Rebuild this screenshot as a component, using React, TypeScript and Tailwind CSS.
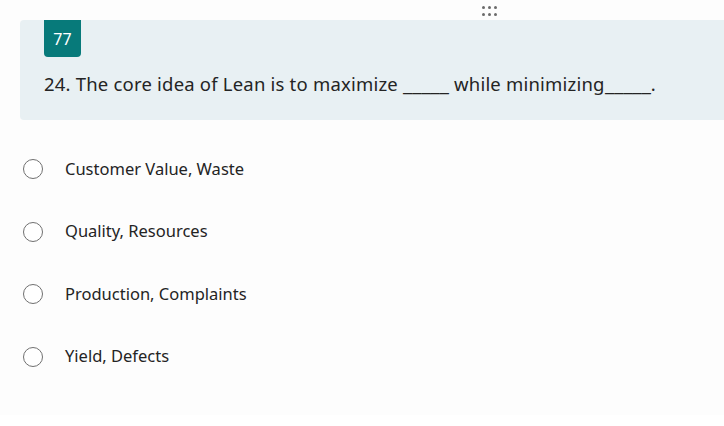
import React from 'react';

export default function App() {
  const options = ['Customer Value, Waste', 'Quality, Resources', 'Production, Complaints', 'Yield, Defects'];
  const blank = <span className="inline-block origin-left scale-x-[1.12] mr-[5px] tracking-normal">_____</span>;

  return (
    <div className="w-[724px] h-[426px] bg-white overflow-hidden" style={{ fontFamily: '"Segoe UI", "Noto Sans", "Open Sans", sans-serif' }}>
      <div className="h-[415px] bg-[#fdfdfd]">
        {/* drag handle */}
        <div className="h-5 flex justify-center pl-[254px] pt-[6px]">
          <div className="grid grid-cols-3 gap-x-[3px] gap-y-[4px] h-[10px]">
            {[0, 1, 2, 3, 4, 5].map((i) => (
              <span key={i} className="w-[3px] h-[3px] rounded-full bg-[#6b6b6b]" />
            ))}
          </div>
        </div>

        <div className="ml-5 h-[100px] bg-[#e8f0f3] rounded-l-[4px] pl-[24px]">
          <div className="w-[37px] h-[37px] bg-[#077a7a] rounded-b-[4px] flex items-center justify-center text-white text-[16px]">
            77
          </div>
          <div className="mt-[15px] text-[18.5px] text-[#242424] leading-6 tracking-[0.2px]">
            24. The core idea of Lean is to maximize {blank} while minimizing{blank}.
          </div>
        </div>

        <div className="pt-[39px] flex flex-col gap-[42.5px]">
          {options.map((o) => (
            <label key={o} className="flex items-center h-5 pl-[23px]">
              <span className="w-5 h-5 rounded-full border border-[#707070] bg-white" />
              <span className="ml-[22px] text-[16.5px] text-[#242424]">{o}</span>
            </label>
          ))}
        </div>
      </div>
    </div>
  );
}
